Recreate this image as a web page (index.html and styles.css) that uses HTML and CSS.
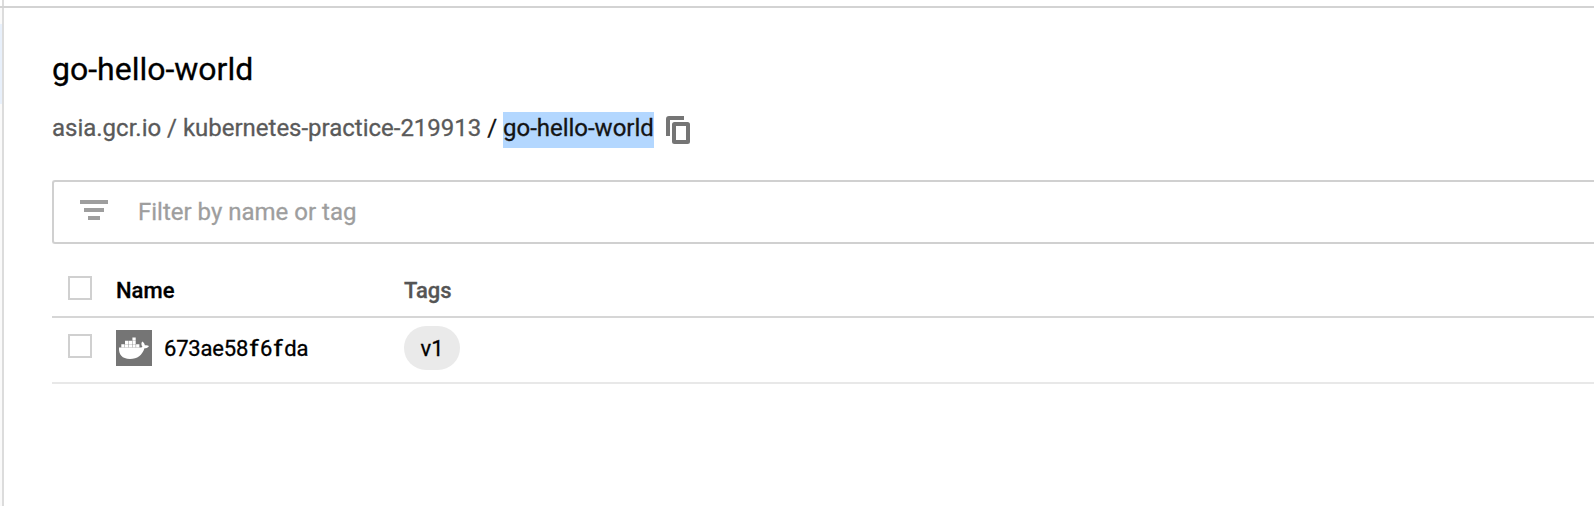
FILE: index.html
```html
<!DOCTYPE html>
<html lang="en">
<head>
<meta charset="utf-8">
<title>go-hello-world</title>
<link rel="stylesheet" href="styles.css">
</head>
<body>
<div class="topbar"></div>
<div class="layout">
  <aside class="sidebar"><div class="sidebar-active"></div></aside>
  <main class="content">
    <h1 class="title">go-hello-world</h1>
    <div class="breadcrumb">
      <span class="path">asia.gcr.io / kubernetes-practice-219913 <span class="slash">/</span>&nbsp;</span><span class="selected">go-hello-world</span>
      <svg class="copy" width="24" height="28" viewBox="0 0 24 28" fill="none" stroke="#757575" stroke-width="4">
        <path d="M18 2H3Q2 2 2 3V20"/><rect x="8" y="8" width="14" height="18" rx=".5"/>
      </svg>
    </div>
    <div class="filter">
      <svg class="filter-icon" width="28" height="20" viewBox="0 0 28 20" fill="#9e9e9e">
        <path d="M0 0h28v4H0zM4 8h20v4H4zM8 16h12v4H8z"/>
      </svg>
      <span class="placeholder">Filter by name or tag</span>
    </div>
    <div class="row head">
      <span class="checkbox"></span>
      <span class="name">Name</span>
      <span class="tags">Tags</span>
    </div>
    <div class="row item">
      <span class="checkbox"></span>
      <span class="name">
        <svg class="docker" width="36" height="36" viewBox="0 0 36 36">
          <path fill="#757575" d="M0 0h36v36H0z"/>
          <path fill="#fff" d="M5.3 14.200h3.300v3.200H5.300zM9 14.200h3.300v3.200H9zM12.700 14.200H16v3.200h-3.300zM16.400 14.200h3.300v3.200h-3.300zM20.100 14.200h3.300v3.200h-3.300zM9 10.800h3.300V14H9zM12.700 10.800H16V14h-3.300zM16.400 10.800h3.300V14h-3.300zM16.400 7.400h3.300v3h-3.300z"/>
          <path fill="#fff" d="M3 17.600H23c1.600 0 2.700-.3 3.400-.9-1.300-1.500-1.300-3.600-.2-5.100 1.500.8 2.400 2.100 2.600 3.700 1.500-.3 3-.1 4.200.7-.9 1.600-2.400 2.300-4.500 2.300C26.200 25.200 21.500 29 14 29 6 29 2.600 24.700 3 17.600z"/>
        </svg>
        <span class="digest">673ae58<span class="narrow">f</span>6<span class="narrow">f</span>da</span>
      </span>
      <span class="tags"><span class="chip">v1</span></span>
    </div>
  </main>
</div>
</body>
</html>
```
FILE: styles.css
```css
* { box-sizing: border-box; }
body {
  margin: 0;
  height: 506px;
  overflow: hidden;
  display: flex;
  flex-direction: column;
  background: #fff;
  color: #000;
  font-family: Roboto, "Liberation Sans", sans-serif;
  font-size: 24px;
  -webkit-text-stroke: .3px currentColor;
}
.topbar {
  height: 8px;
  flex: none;
  border-bottom: 2px solid #d3d3d3;
  background: linear-gradient(to right, transparent 2px, #dcdcdc 2px, #dcdcdc 4px, transparent 4px);
}
.layout { display: flex; flex: 1; }
.sidebar {
  width: 4px;
  padding-top: 16px;
  border-right: 2px solid #dcdcdc;
  background: #fafafa;
}
.sidebar-active { height: 80px; background: #e8f0fb; }
.content { flex: 1; padding: 40px 0 0 48px; }
.title {
  margin: 0;
  height: 42px;
  line-height: 42px;
  font-size: 32px;
  font-weight: 400;
}
.breadcrumb {
  display: flex;
  height: 36px;
  margin-top: 22px;
  line-height: 32px;
  white-space: nowrap;
}
.path { color: #5a5a5a; letter-spacing: -.01px; }
.slash { color: #111; }
.selected { background: #b3d7ff; color: #141414; letter-spacing: -.02px; }
.copy { margin: 4px 0 0 12px; }
.filter {
  display: flex;
  height: 64px;
  margin-top: 32px;
  padding: 18px 0 0 26px;
  border: 2px solid #d0d0d0;
  border-right: 0;
  border-radius: 3px 0 0 3px;
}
.placeholder {
  margin: -4px 0 0 30px;
  line-height: 32px;
  color: #9e9e9e;
}
.row {
  display: flex;
  padding-left: 16px;
  font-size: 22px;
}
.head {
  height: 74px;
  padding-top: 32px;
  border-bottom: 2px solid #d6d6d6;
  font-weight: 500;
}
.head .name, .head .tags { line-height: 30px; }
.head .tags { color: #555; }
.item {
  height: 66px;
  padding-top: 8px;
  border-bottom: 2px solid #e8e8e8;
}
.checkbox {
  width: 24px;
  height: 24px;
  flex: none;
  border: 2px solid #d0d0d0;
}
.item .checkbox { margin-top: 8px; }
.name { width: 312px; padding-left: 24px; display: flex; }
.docker { margin-top: 4px; }
.digest {
  margin-left: 12px;
  line-height: 46px;
  height: 44px;
  letter-spacing: -.2px;
}
.narrow {
  display: inline-block;
  width: 12px;
  text-align: center;
  transform: scaleX(1.25);
}
.chip {
  display: block;
  width: 56px;
  height: 44px;
  border-radius: 22px;
  background: #eaeaea;
  line-height: 46px;
  text-align: center;
}
```
